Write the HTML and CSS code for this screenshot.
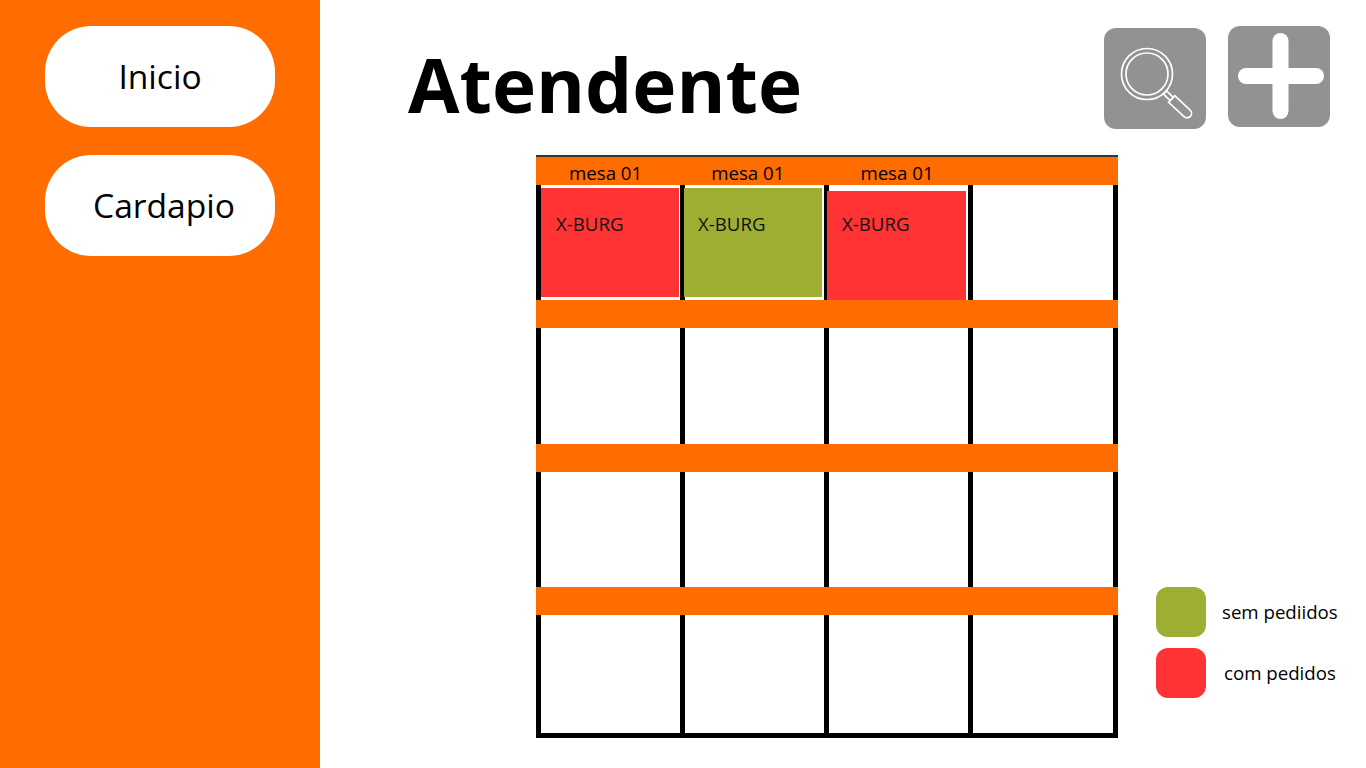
FILE: index.html
```html
<!DOCTYPE html>
<html>
  <head>
    <link rel="stylesheet" href="styles.css">
  </head>
  <body>
    <div id="sidebar">
      <div class="nav-btn">Inicio</div>
      <div class="nav-btn cardapio">Cardapio</div>
    </div>
    <div id="main">
      <div class="header">
        <div class="title">Atendente</div>
        <div class="icon-btn search">
          <svg width="102" height="101" viewBox="0 0 102 101">
            <g fill="none" stroke="#fff" stroke-width="1.7">
              <circle cx="43" cy="46" r="25.5" />
              <circle cx="43" cy="46" r="21" />
              <path d="M62.6 62.9 L69.3 69.4 L66.1 72.6 L59.4 66.1 Z" />
              <path d="M0 -4.5 H21 a4.5 4.5 0 0 1 0 9 H0 Z" transform="translate(67.7 71) rotate(43)" />
            </g>
          </svg>
        </div>
        <div class="icon-btn plus">
          <svg width="102" height="101" viewBox="0 0 102 101">
            <rect x="44.5" y="7" width="16" height="86" rx="8" fill="#fff" />
            <rect x="10" y="42" width="86" height="16" rx="8" fill="#fff" />
          </svg>
        </div>
      </div>
      <div class="content">
        <div class="board">
          <div class="band first">
            <span>mesa 01</span>
            <span>mesa 01</span>
            <span>mesa 01</span>
          </div>
          <div class="cells">
            <div class="cell"><div class="card red">X-BURG</div></div>
            <div class="cell"><div class="card green">X-BURG</div></div>
            <div class="cell"><div class="card red low">X-BURG</div></div>
            <div class="cell"></div>
          </div>
          <div class="band"></div>
          <div class="cells tall">
            <div class="cell"></div>
            <div class="cell"></div>
            <div class="cell"></div>
            <div class="cell"></div>
          </div>
          <div class="band"></div>
          <div class="cells">
            <div class="cell"></div>
            <div class="cell"></div>
            <div class="cell"></div>
            <div class="cell"></div>
          </div>
          <div class="band"></div>
          <div class="cells last">
            <div class="cell"></div>
            <div class="cell"></div>
            <div class="cell"></div>
            <div class="cell"></div>
          </div>
        </div>
        <div class="legend">
          <div class="legend-row">
            <div class="swatch green"></div>
            <div class="legend-label">sem pediidos</div>
          </div>
          <div class="legend-row">
            <div class="swatch red"></div>
            <div class="legend-label com">com pedidos</div>
          </div>
        </div>
      </div>
    </div>
  </body>
</html>
```

FILE: styles.css
```css
body {
  margin: 0;
  height: 100vh;
  display: flex;
  overflow: hidden;
  background-color: white;
  color: black;
  font-family: "Open Sans", sans-serif;
}

#sidebar {
  width: 320px;
  flex-shrink: 0;
  box-sizing: border-box;
  padding: 26px 45px;
  display: flex;
  flex-direction: column;
  gap: 28px;
  background-color: #ff6c00;
}

.nav-btn {
  width: 230px;
  height: 101px;
  box-sizing: border-box;
  padding-bottom: 2px;
  display: flex;
  justify-content: center;
  align-items: center;
  border-radius: 46px;
  background-color: white;
  font-size: 33.6px;
}

.nav-btn.cardapio {
  padding-left: 8px;
}

#main {
  flex: 1;
  display: flex;
  flex-direction: column;
}

.header {
  height: 155px;
  display: flex;
  align-items: flex-start;
  padding-left: 88px;
}

.title {
  font-size: 74.67px;
  font-weight: bold;
  line-height: 102px;
  margin-top: 33px;
  margin-right: auto;
}

.icon-btn {
  width: 102px;
  height: 101px;
  border-radius: 12px;
  background-color: #929292;
}

.icon-btn svg {
  display: block;
}

.icon-btn.search {
  margin-top: 28px;
}

.icon-btn.plus {
  margin-top: 26px;
  margin-left: 22px;
  margin-right: 36px;
}

.content {
  display: flex;
  padding-left: 216px;
}

.board {
  width: 582px;
  box-sizing: border-box;
  border-top: 2px solid #333;
  border-bottom: 5px solid black;
}

.band {
  height: 28px;
  display: flex;
  align-items: center;
  background-color: #ff6c00;
  font-size: 18.67px;
}

.band.first {
  box-sizing: border-box;
  padding-top: 3px;
}

.band span:nth-child(1) {
  margin-left: 33px;
}

.band span:nth-child(2) {
  margin-left: 69px;
}

.band span:nth-child(3) {
  margin-left: 76px;
}

.cells {
  height: 115px;
  display: grid;
  grid-template-columns: 144px 144px 144px 150px;
}

.cells.tall {
  height: 116px;
}

.cells.last {
  height: 118px;
}

.cell {
  border-left: 5px solid black;
  min-width: 0;
}

.cell:last-child {
  border-right: 5px solid black;
}

.card {
  height: 109px;
  margin: 3px 1px 0 0;
  box-sizing: border-box;
  padding: 24px 0 0 15px;
  font-size: 18.67px;
  line-height: 24px;
  color: #111;
}

.card.green {
  margin: 3px 2px 0 -1px;
  padding-left: 14px;
}

.card.low {
  margin: 6px 2px 0 -2px;
  padding: 21px 0 0 15px;
}

.red {
  background-color: #ff3333;
}

.green {
  background-color: #9eae33;
}

.legend {
  align-self: flex-end;
  margin-left: 38px;
  margin-bottom: 40px;
  display: flex;
  flex-direction: column;
  gap: 11px;
}

.legend-row {
  display: flex;
  align-items: center;
}

.swatch {
  width: 50px;
  height: 50px;
  border-radius: 12px;
}

.legend-label {
  margin-left: 16px;
  margin-bottom: 2px;
  font-size: 18.67px;
  white-space: nowrap;
}

.legend-label.com {
  margin-left: 18px;
}
```
